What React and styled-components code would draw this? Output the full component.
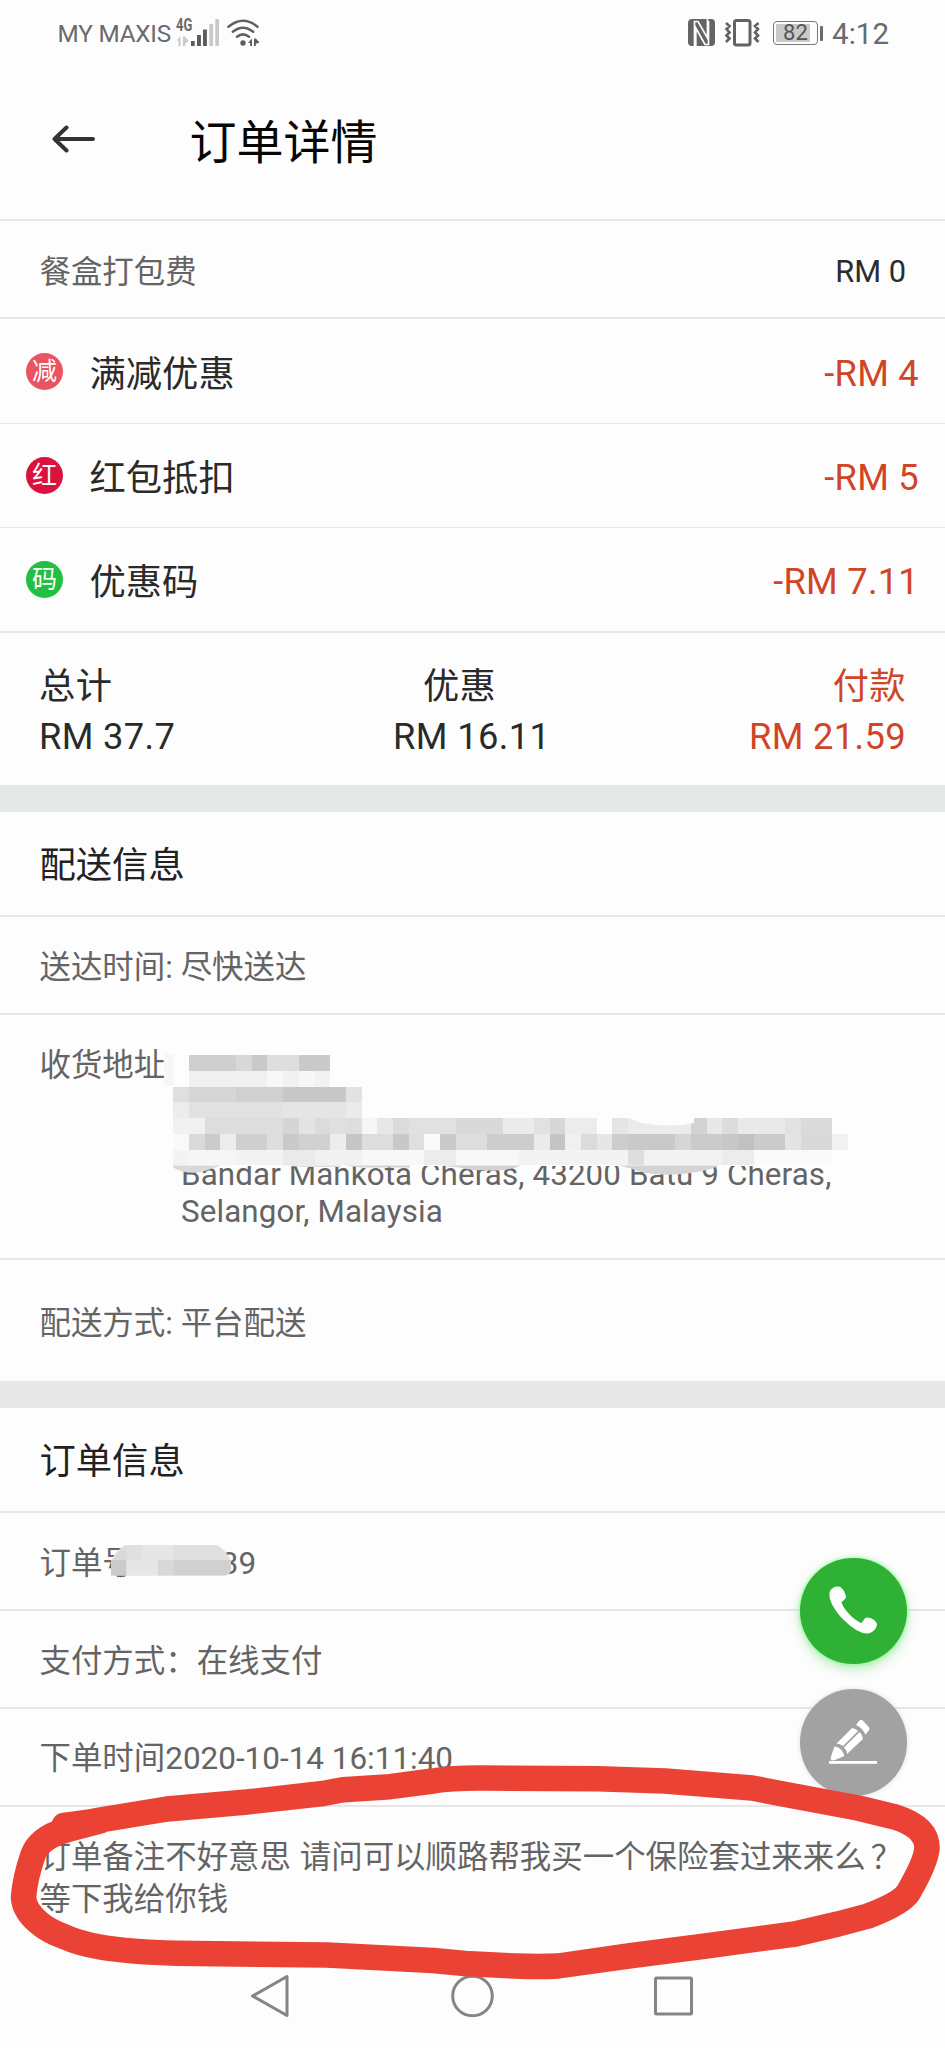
import React from "react";
import styled, { createGlobalStyle, css } from "styled-components";

const GlobalStyle = createGlobalStyle`
  * { box-sizing: border-box; }
  body {
    margin: 0;
    background: #fdfdfd;
    font-family: Roboto, "Noto Sans CJK SC", sans-serif;
    -webkit-font-smoothing: antialiased;
  }
  svg { display: block; flex: none; }
`;

const Screen = styled.main`
  position: relative;
  display: flex;
  flex-direction: column;
  width: 945px;
  height: 2048px;
  overflow: hidden;
  background: #fdfdfd;
`;

const StatusBar = styled.header`
  display: flex;
  justify-content: space-between;
  height: 66px;
  padding: 0 56px 0 57.5px;
  color: #6a6a6a;
`;

const StatusGroup = styled.div`
  display: flex;
  align-items: center;
`;

const Carrier = styled.span`
  width: 117.5px;
  font-size: 24.3px;
  line-height: 66px;
  padding-top: 2px;
  letter-spacing: -0.2px;
  white-space: nowrap;
`;

const Network = styled.div`
  position: relative;
  display: flex;
`;

const NetworkType = styled.span`
  position: absolute;
  left: 1px;
  top: 15px;
  font-size: 18px;
  font-weight: 700;
  line-height: 20px;
  transform: scaleX(0.72);
  transform-origin: left;
`;

const Battery = styled.div`
  display: flex;
  align-items: center;
  margin: 0 9px 0 13px;
`;

const BatteryCase = styled.div`
  display: flex;
  width: 45px;
  height: 24px;
  padding: 2px;
  border: 1.5px solid #777;
  border-radius: 4px;
`;

const BatteryLevel = styled.div`
  width: 34px;
  padding-left: 7px;
  background: #c9c9c9;
  font-size: 22px;
  line-height: 18px;
  color: #555;
`;

const BatteryTip = styled.div`
  width: 3px;
  height: 15px;
  margin-left: 2px;
  border-radius: 1px;
  background: #6a6a6a;
`;

const Clock = styled.span`
  font-size: 29.5px;
  line-height: 66px;
  padding-top: 1px;
`;

const TitleBar = styled.div`
  display: flex;
  align-items: center;
  height: 153px;
  padding: 0 0 7px 52px;
`;

const Title = styled.h1`
  margin: 7px 0 0 93.5px;
  font-size: 47px;
  font-weight: 400;
  line-height: 60px;
  color: #060606;
`;

const Row = styled.div`
  display: flex;
  flex: none;
  align-items: center;
  justify-content: ${(p) => (p.$between ? "space-between" : "flex-start")};
  height: ${(p) => p.$h}px;
  padding: ${(p) => p.$top ?? 5}px 39px 0 39.5px;
  border-top: ${(p) => p.$line ?? 2}px solid #e7e7e7;
  font-size: 31.45px;
  line-height: 36px;
  color: #646464;
  white-space: pre;
`;

const Label = styled.span`
  padding-top: 2px;
`;

const Fee = styled.span`
  color: #2c2c2c;
  font-size: 30.8px;
`;

const PromoRow = styled(Row)`
  padding-left: 26px;
  padding-right: 26px;
  font-size: 36.3px;
  color: #2a2a2a;
`;

const Badge = styled.span`
  display: flex;
  align-items: center;
  justify-content: center;
  width: 37px;
  height: 37px;
  margin: -5px 26.5px 0 0;
  border-radius: 50%;
  background: ${(p) => p.$color};
  color: #fff;
  font-size: 25px;
  line-height: 37px;
`;

const Discount = styled.span`
  margin-left: auto;
  letter-spacing: 0.25px;
  color: #cf4526;
`;

const Totals = styled.section`
  display: flex;
  flex: none;
  justify-content: space-between;
  height: 154px;
  padding: 29px 39px 0 39px;
  border-top: 2px solid #e7e7e7;
`;

const align = { start: "flex-start", center: "center", end: "flex-end" };

const Total = styled.div`
  display: flex;
  flex-direction: column;
  align-items: ${(p) => align[p.$align]};
  font-size: 36.3px;
  line-height: 49.5px;
  letter-spacing: 0.35px;
  color: ${(p) => (p.$due ? "#cf4526" : "#2a2a2a")};
  ${(p) =>
    p.$align === "center" &&
    css`
      margin-left: 19px;
      span:first-child {
        padding-right: 24px;
      }
    `}
`;

const Divider = styled.div`
  flex: none;
  height: 27px;
  background: ${(p) => p.$color};
`;

const SectionTitle = styled.h2`
  display: flex;
  flex: none;
  align-items: center;
  height: 103px;
  margin: 0;
  padding: 5px 39.5px 0;
  font-size: 36.3px;
  font-weight: 400;
  line-height: 42px;
  color: #222;
`;

const AddressRow = styled(Row)`
  position: relative;
  align-items: flex-start;
  line-height: 36.45px;
`;

const AddressLabel = styled.span`
  width: 141.5px;
`;

const Address = styled.div`
  padding-top: 109.3px;
  font-size: 31.3px;
  letter-spacing: 0.13px;
`;

const AddressMask = styled.svg`
  position: absolute;
  left: 157px;
  top: 20px;
`;

const HiddenDigits = styled.span`
  position: relative;
  display: inline-block;
  width: 87px;
  height: 36px;
`;

const DigitsMask = styled.svg`
  position: absolute;
  left: -23.500px;
  top: -1px;
`;

const Remark = styled.p`
  flex: none;
  height: 143px;
  margin: 0;
  padding: 30px 39.5px 0;
  border-top: 2px solid #e7e7e7;
  font-size: 31.45px;
  line-height: 41.7px;
  word-spacing: 1px;
  color: #646464;
  white-space: pre;
`;

const QuestionMark = styled.span`
  margin-left: 5px;
`;

const NavBar = styled.nav`
  display: flex;
  flex: none;
  align-items: center;
  height: 96px;
  padding-left: 250px;
`;

const NavIcon = styled.svg`
  margin-right: ${(p) => p.$gap ?? 0}px;
`;

const Actions = styled.div`
  position: absolute;
  left: 800px;
  top: 1557.5px;
  display: flex;
  flex-direction: column;
  gap: 25px;
`;

const ActionButton = styled.button`
  display: flex;
  align-items: center;
  justify-content: center;
  width: 106.5px;
  height: 106.5px;
  padding: 0;
  border: 0;
  border-radius: 50%;
  background: ${(p) => p.$color};
  box-shadow: ${(p) => p.$shadow};
`;

const Marker = styled.svg`
  position: absolute;
  left: 0;
  top: 1740px;
  pointer-events: none;
`;

/* Mosaic strips: [row, first column, last column, grey level]. */
const CELL = 15.68;
const MOSAIC = [
  [0, 1, 3, 207], [0, 4, 4, 216], [0, 5, 5, 201], [0, 6, 7, 222], [0, 8, 9, 202],
  [1, 1, 5, 240], [1, 6, 6, 248], [1, 7, 7, 241], [1, 8, 8, 247], [1, 9, 9, 242],
  [2, 0, 0, 223], [2, 1, 3, 214], [2, 4, 6, 208], [2, 7, 10, 200], [2, 11, 11, 226],
  [3, 0, 0, 236], [3, 1, 6, 225], [3, 7, 10, 229], [3, 11, 11, 235],
  [4, 0, 1, 241], [4, 2, 6, 221], [4, 7, 7, 213], [4, 8, 8, 228], [4, 9, 9, 219],
  [4, 10, 10, 224], [4, 11, 11, 222], [4, 12, 12, 246], [4, 13, 13, 231], [4, 14, 14, 219],
  [4, 15, 17, 225], [4, 18, 20, 217], [4, 21, 22, 235], [4, 23, 23, 225], [4, 24, 24, 215],
  [4, 25, 26, 236], [4, 28, 28, 229], [4, 29, 32, 235], [4, 33, 33, 211], [4, 34, 34, 232],
  [4, 35, 35, 220], [4, 36, 38, 233], [4, 39, 39, 226], [4, 40, 41, 218],
  [5, 0, 0, 249], [5, 1, 1, 218], [5, 2, 2, 203], [5, 3, 3, 236], [5, 4, 5, 207],
  [5, 6, 6, 222], [5, 7, 7, 202], [5, 8, 9, 209], [5, 10, 10, 237], [5, 11, 11, 198],
  [5, 12, 13, 221], [5, 14, 14, 200], [5, 15, 15, 223], [5, 16, 16, 250], [5, 17, 17, 202],
  [5, 18, 19, 221], [5, 20, 22, 205], [5, 23, 23, 235], [5, 24, 24, 196], [5, 25, 25, 240],
  [5, 26, 26, 219], [5, 27, 27, 230], [5, 28, 28, 205], [5, 29, 31, 201], [5, 32, 32, 214],
  [5, 33, 34, 203], [5, 35, 35, 200], [5, 36, 36, 193], [5, 37, 38, 203], [5, 39, 39, 228],
  [5, 40, 41, 217], [5, 42, 42, 242],
  [6, 0, 0, 243], [6, 1, 3, 246], [6, 4, 6, 243], [6, 7, 8, 234], [6, 9, 11, 241],
  [6, 12, 15, 248], [6, 16, 17, 236], [6, 18, 21, 248], [6, 22, 28, 243], [6, 29, 29, 222],
  [6, 30, 34, 242], [6, 35, 36, 236], [6, 37, 41, 250],
];

const NOTE_RING =
  "M64 85.5 Q80 83.500 100 80 L167 69 L247 62 L323 53.5 L343 49.7 L390 46.7 L433 41 Q450 38 480 38 L598 38.7 L665 41 L752 48 L775 52.5 L858 68 L895 77 Q927 87 927 108 Q926 122 908 153 Q900 164 868 176 L838 184 L795 194 L702 206.5 L632 215.5 L558 226 Q540 227 515 226 L465 223.5 L433 220.5 L327 215 L177 213.3 Q130 212 100 207 Q78 203 65 197 Q48 191 38 182 Q24 170 23.500 157 Q25 138 33 115 Q39 98 66 90 L100 81";

function AddressMosaic() {
  return (
    <AddressMask width="700" height="150" viewBox="157 1035 700 150" shapeRendering="crispEdges">
      <rect x="164" y="1054" width="10" height="32" fill="#f7f7f7" />
      <rect x="173" y="1148" width="680" height="18" fill="#fdfdfd" />
      {MOSAIC.map(([r, a, b, g], i) => (
        <rect
          key={i}
          x={173.4 + a * CELL}
          y={1055.2 + r * 15.72}
          width={(b - a + 1) * CELL}
          height={15.8}
          fill={`rgb(${g},${g},${g})`}
        />
      ))}
      <g shapeRendering="auto">
        <path d="M628 1118h66v5q-24 5-52 0z" fill="#fdfdfd" />
        <path d="M173 1165.5h48q-12 4-18 6q-16 4-30-4z" fill="#d9d9d9" />
        <path d="M281 1165.5h60v1.5h-38z" fill="#dcdcdc" />
        <path d="M345 1165.5h65v2h-50z" fill="#d2d2d2" />
        <path d="M438 1165.5h82q-8 5-32 5q-20 0-28-3z" fill="#d2d2d2" />
        <path d="M618 1165.5h101q-14 7-44 9q-30 1-44-6z" fill="#d4d4d4" />
      </g>
    </AddressMask>
  );
}

export default function App() {
  return (
    <>
      <GlobalStyle />
      <Screen>
        <StatusBar>
          <StatusGroup>
            <Carrier>MY MAXIS</Carrier>
            <Network>
              <svg width="86" height="66" viewBox="175 0 86 66">
                <g fill="#c9c9c9">
                  <path d="M176.500 40.500l4-4v9.500h-2v-5.500zM183 36.500h2l3.500 4.500l-3.500 3v2h-2z" />
                  <rect x="209.300" y="24" width="3.700" height="22" />
                  <rect x="215.300" y="19" width="3.700" height="27" />
                </g>
                <g fill="#5c5c5c">
                  <rect x="191" y="41" width="3.700" height="5" />
                  <rect x="197" y="35" width="3.900" height="11" />
                  <rect x="203" y="29.500" width="3.900" height="16.500" />
                  <circle cx="243" cy="43" r="2.700" />
                  <path d="M248 43l4-4.500v7.500h-1.800v-3zM254 38.500h1.800l3.700 4l-3.700 1.200v2.300h-1.800z" />
                </g>
                <g fill="none" stroke="#606060" strokeWidth="2.500" strokeLinecap="round">
                  <path d="M228.500 26.800q14.500-12 29 0" />
                  <path d="M232.800 31.800q10.200-8.200 20.400 0" />
                  <path d="M237 36.800q6-4.800 12 0" />
                </g>
              </svg>
              <NetworkType>4G</NetworkType>
            </Network>
          </StatusGroup>
          <StatusGroup>
            <svg width="72" height="66" viewBox="688 0 72 66">
              <rect x="688" y="19" width="27" height="27" rx="4" fill="#646464" />
              <path
                d="M694.500 46V21.500h3.500l9.500 16.500V19M708.500 21v23.500h-3.500L695.800 28v18"
                fill="none"
                stroke="#fdfdfd"
                strokeWidth="1.700"
              />
              <rect x="734.500" y="20.500" width="15.500" height="24.500" rx="2" fill="none" stroke="#626262" strokeWidth="3" />
              <path
                d="M726 23l3.500 3l-3 3l3 3.500l-3 3l3 3l-3.500 3.500M758.500 23l-3.500 3l3 3l-3 3.500l3 3l-3 3l3.500 3.500"
                fill="none"
                stroke="#626262"
                strokeWidth="2.600"
              />
            </svg>
            <Battery>
              <BatteryCase>
                <BatteryLevel>82</BatteryLevel>
              </BatteryCase>
              <BatteryTip />
            </Battery>
            <Clock>4:12</Clock>
          </StatusGroup>
        </StatusBar>

        <TitleBar>
          <svg width="44" height="30" viewBox="0 0 44 30">
            <path d="M41 15H3M14.500 3.500L2.500 15L14.500 26.500" fill="none" stroke="#333" strokeWidth="4" strokeLinecap="round" strokeLinejoin="round" />
          </svg>
          <Title>订单详情</Title>
        </TitleBar>

        <Row $h={98} $between>
          <Label>餐盒打包费</Label>
          <Fee>RM 0</Fee>
        </Row>
        <PromoRow $h={106}>
          <Badge $color="#e95463">减</Badge>
          <Label>满减优惠</Label>
          <Discount>-RM 4</Discount>
        </PromoRow>
        <PromoRow $h={104} $line={1}>
          <Badge $color="#da1240">红</Badge>
          <Label>红包抵扣</Label>
          <Discount>-RM 5</Discount>
        </PromoRow>
        <PromoRow $h={104} $line={1} $top={4}>
          <Badge $color="#22bf41">码</Badge>
          <Label>优惠码</Label>
          <Discount>-RM 7.11</Discount>
        </PromoRow>
        <Totals>
          <Total $align="start">
            <span>总计</span>
            <span>RM 37.7</span>
          </Total>
          <Total $align="center">
            <span>优惠</span>
            <span>RM 16.11</span>
          </Total>
          <Total $align="end" $due>
            <span>付款</span>
            <span>RM 21.59</span>
          </Total>
        </Totals>

        <Divider $color="#e5e8e9" />
        <SectionTitle>配送信息</SectionTitle>
        <Row $h={98}>送达时间: 尽快送达</Row>
        <AddressRow $h={245} $top={33}>
          <AddressLabel>收货地址</AddressLabel>
          <Address>
            Bandar Mahkota Cheras, 43200 Batu 9 Cheras,
            <br />
            Selangor, Malaysia
          </Address>
          <AddressMosaic />
        </AddressRow>
        <Row $h={123} $top={7}>配送方式: 平台配送</Row>

        <Divider $color="#e8e8e8" />
        <SectionTitle>订单信息</SectionTitle>
        <Row $h={98}>
          订单号
          <HiddenDigits>
            <DigitsMask width="122" height="31" viewBox="110 1544 122 31">
              <path d="M125 1544h92q10 6 14 16v10q-2 4-6 4.500H111v-15q5-10 14-15.500z" fill="#e0e0e0" />
              <path d="M111 1559h15.500v15.500H111z" fill="#cbcbcb" />
              <path d="M114 1559q4-9 12.500-14v14z" fill="#d9d9d9" />
              <path d="M126.500 1559h31v15.500h-31zM142 1544h31v15h-31z" fill="#e6e6e6" />
              <path d="M158 1559h15.500v15.500H158z" fill="#d8d8d8" />
              <path d="M173.500 1559h57.500v11q-2 4-6 4.500h-51.500z" fill="#d0d0d0" />
            </DigitsMask>
          </HiddenDigits>
          39
        </Row>
        <Row $h={98}>支付方式：在线支付</Row>
        <Row $h={98} $top={4}>下单时间2020-10-14 16:11:40</Row>
        <Remark>
          订单备注不好意思 请问可以顺路帮我买一个保险套过来来么
          <QuestionMark>？</QuestionMark>
          <br />
          等下我给你钱
        </Remark>

        <NavBar>
          <NavIcon $gap={161} width="40" height="44" viewBox="0 0 40 44">
            <path d="M37 2.500V41.500L2.500 22Z" fill="none" stroke="#858585" strokeWidth="3" strokeLinejoin="round" />
          </NavIcon>
          <NavIcon $gap={159} width="44" height="44" viewBox="0 0 44 44">
            <circle cx="21.500" cy="22" r="19.800" fill="none" stroke="#858585" strokeWidth="3" />
          </NavIcon>
          <NavIcon width="40" height="40" viewBox="0 0 40 40">
            <rect x="1.500" y="2" width="36" height="36" rx="1" fill="none" stroke="#858585" strokeWidth="3" />
          </NavIcon>
        </NavBar>

        <Actions>
          <ActionButton $color="#2eb135" $shadow="0 0 4px #7dff86, 0 5px 12px rgba(60, 200, 70, 0.35)" aria-label="Call">
            <svg width="52" height="52" viewBox="0 0 52 52">
              <path
                d="M3 6C5 2 11 0 14 2.500C17 5 18.500 9 19 12C18.500 14.500 15 16 14.500 17.500C16 24 27 35 34 38C36 37.500 36.500 33.500 39.500 32.500C43 32 49 35 50 39C50 43 46 48 41 48.500C35 49 26 44 18 36C9 28 0 14 3 6Z"
                fill="#fff"
              />
            </svg>
          </ActionButton>
          <ActionButton $color="#a2a2a2" $shadow="0 0 5px rgba(0, 0, 0, 0.12)" aria-label="Edit">
            <svg width="50" height="46" viewBox="0 0 50 46">
              <g fill="#fff">
                <path d="M31.500 1.500q1.500-1.500 3-.2l6.500 7q1.200 1.500 0 3l-3.500 4.200q-3-6.500-9.500-9.500z" />
                <path d="M24 9q4 .5 6 3L15 27q-3-2.500-6.500-2.500z" />
                <path d="M31.500 13q3 2.500 3.500 7L19 35q0-3.500-3-6.500z" />
                <path d="M6.500 27.500q7 .5 10 9.500L7 41l-3 .5L2.500 40l1-4z" />
                <rect x="1" y="42" width="48" height="2.800" />
              </g>
            </svg>
          </ActionButton>
        </Actions>

        <Marker width="945" height="260" viewBox="0 0 945 260">
          <path d={NOTE_RING} fill="none" stroke="#ea4335" strokeWidth="25.500" strokeLinejoin="round" strokeLinecap="round" />
        </Marker>
      </Screen>
    </>
  );
}
